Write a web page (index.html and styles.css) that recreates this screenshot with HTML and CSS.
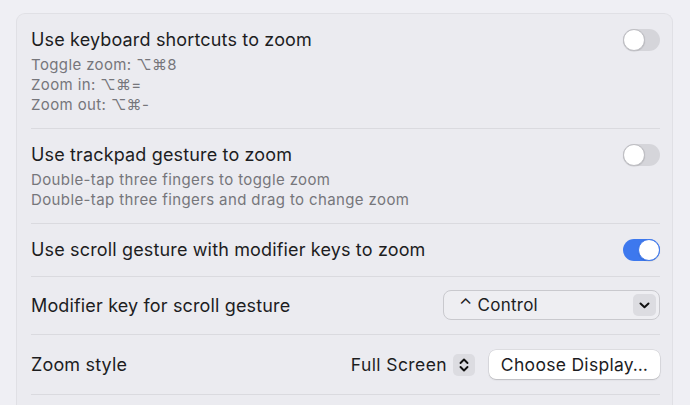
FILE: index.html
```html
<!DOCTYPE HTML>
<html>
<head>
<meta charset="UTF-8">
<title>Zoom</title>
<link rel="stylesheet" href="styles.css">
</head>
<body>
<div id="card">
	<div class="row">
		<div class="text">
			<div class="title">Use keyboard shortcuts to zoom</div>
			<div class="sub">Toggle zoom: ⌥⌘8</div>
			<div class="sub">Zoom in: ⌥⌘=</div>
			<div class="sub">Zoom out: ⌥⌘-</div>
		</div>
		<div class="toggle"><span class="knob"></span></div>
	</div>
	<div class="row">
		<div class="text">
			<div class="title">Use trackpad gesture to zoom</div>
			<div class="sub">Double-tap three fingers to toggle zoom</div>
			<div class="sub">Double-tap three fingers and drag to change zoom</div>
		</div>
		<div class="toggle"><span class="knob"></span></div>
	</div>
	<div class="row center">
		<div class="title">Use scroll gesture with modifier keys to zoom</div>
		<div class="toggle on"><span class="knob"></span></div>
	</div>
	<div class="row center">
		<div class="title">Modifier key for scroll gesture</div>
		<div class="popup">
			<span class="popup-label">⌃ Control</span>
			<span class="popup-arrow">
				<svg width="11" height="7" viewBox="0 0 11 7"><path d="M1.5 1.5 L5.5 5.2 L9.5 1.5" fill="none" stroke="#111" stroke-width="2" stroke-linecap="round" stroke-linejoin="round"/></svg>
			</span>
		</div>
	</div>
	<div class="row center style-row">
		<div class="title">Zoom style</div>
		<div class="controls">
			<span class="value">Full Screen</span>
			<span class="stepper">
				<svg width="10" height="16" viewBox="0 0 10 16"><path d="M1.5 6 L5 2.5 L8.5 6 M1.5 10 L5 13.5 L8.5 10" fill="none" stroke="#111" stroke-width="1.9" stroke-linecap="round" stroke-linejoin="round"/></svg>
			</span>
			<button class="btn">Choose Display…</button>
		</div>
	</div>
</div>
</body>
</html>
```

FILE: styles.css
```css
html, body {margin:0; height:405px; overflow:hidden;}
body {background:#efeff4; font-family:Inter, "Noto Sans", sans-serif; color:#1d1d1f; padding:13px 17px 0 16px; box-sizing:border-box;}
#card {background:#ebebf0; border:1px solid #e0e0e5; border-bottom:none; border-radius:9px 9px 0 0; padding:0 12px 0 14px; height:392px; box-sizing:border-box;}
.row {display:flex; justify-content:space-between; align-items:flex-start; padding:13px 0 13px; border-bottom:1px solid #dadadf;}
.row.center {align-items:center; padding-bottom:14px;}
.row.style-row {padding:15px 0 15px;}
.title {font-size:18px; line-height:25px; letter-spacing:0.15px;}
.text .title {margin-bottom:3px;}
.sub {font-size:15px; line-height:20px; color:#76767b; letter-spacing:0.38px;}
.toggle {width:37px; height:22px; border-radius:11px; background:#d5d5da; position:relative; margin-top:2px; flex:none;}
.toggle .knob {position:absolute; left:0; top:0; width:20px; height:20px; border-radius:50%; background:#fff; border:1px solid #bdbdc2; box-shadow:0 0.5px 1px rgba(0,0,0,0.15);}
.toggle.on {background:#3d78ee; margin-top:0;}
.toggle.on .knob {left:auto; right:0; border-color:#3d78ee;}
.popup {border:1px solid #c9c9ce; border-radius:8px; background:#eeeef2; display:flex; align-items:center; justify-content:space-between; padding:0 3px 0 15px; box-sizing:border-box; width:217px; height:30px;}
.popup-label {font-size:17px; letter-spacing:0.25px;}
.popup-arrow {width:23px; height:22px; border-radius:5px; background:#dcdce1; display:flex; align-items:center; justify-content:center;}
.controls {display:flex; align-items:center;}
.value {font-size:17.5px; letter-spacing:0.4px;}
.stepper {width:22px; height:22px; border-radius:5px; background:#dcdce1; display:flex; align-items:center; justify-content:center; margin:0 14px 0 6px;}
.btn {font-family:inherit; font-size:17.5px; letter-spacing:0.3px; color:#1d1d1f; background:#fff; border:none; border-radius:7px; width:171px; height:29px; padding:0; box-shadow:0 0 0 0.5px rgba(0,0,0,0.12), 0 1px 1.5px rgba(0,0,0,0.15);}
```
